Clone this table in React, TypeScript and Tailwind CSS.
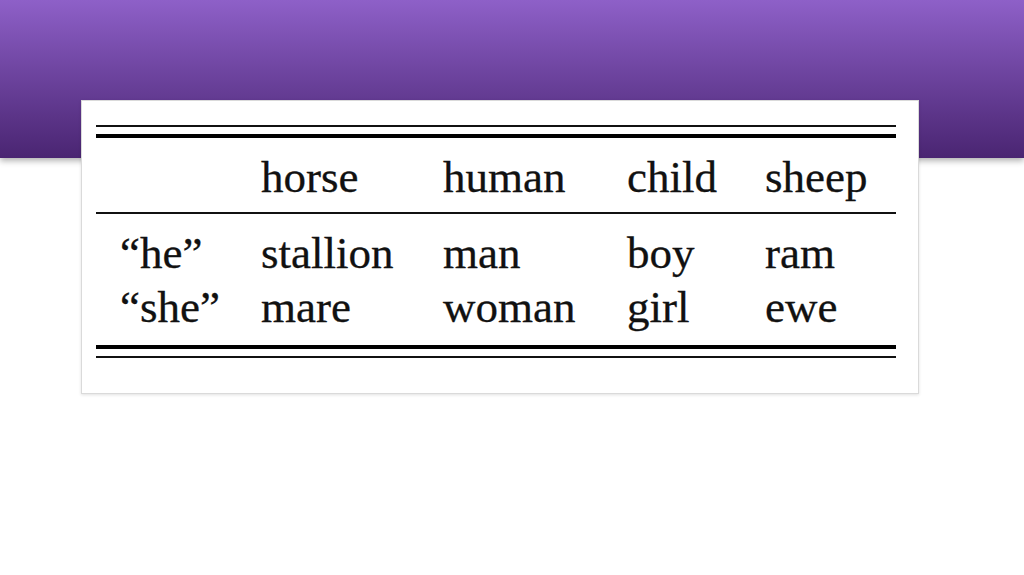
const COLS = ["horse", "human", "child", "sheep"]

const ROWS = [
  { label: "\u201che\u201d", words: ["stallion", "man", "boy", "ram"] },
  { label: "\u201cshe\u201d", words: ["mare", "woman", "girl", "ewe"] },
]

function Row({ label, words }: { label: string; words: string[] }) {
  return (
    <div className="grid grid-cols-[145px_182px_184px_138px_1fr] pl-[20px] h-[54px] leading-[54px]">
      <span className="pl-[4px]">{label}</span>
      {words.map((w) => (
        <span key={w}>{w}</span>
      ))}
    </div>
  )
}

export default function App() {
  return (
    <div className="h-[575px] w-[1024px] overflow-hidden bg-white">
      <div className="h-[158px] bg-gradient-to-b from-[#8e60c8] to-[#4a2572] shadow-[0_3px_6px_rgba(0,0,0,0.3)]" />
      <div className="relative ml-[81px] mt-[-58px] w-[838px] border border-[#dadada] bg-white pt-[24px] pr-[22px] pb-[35px] pl-[14px] shadow-[0_1px_3px_rgba(0,0,0,0.12)]">
        <div className="h-[2px] bg-[#111]" />
        <div className="mt-[7px] h-[4px] bg-black" />
        <div className="mt-[12px] text-[45px] text-[#111] font-['Liberation_Serif',serif] [-webkit-text-stroke:0.3px_#111]">
          <div className="grid grid-cols-[145px_182px_184px_138px_1fr] pl-[20px] h-[54px] leading-[54px]">
            <span />
            {COLS.map((c) => (
              <span key={c}>{c}</span>
            ))}
          </div>
        </div>
        <div className="mt-[8px] h-[2px] bg-[#111]" />
        <div className="mt-[12px] text-[45px] text-[#111] font-['Liberation_Serif',serif] [-webkit-text-stroke:0.3px_#111]">
          {ROWS.map((r) => (
            <Row key={r.label} label={r.label} words={r.words} />
          ))}
        </div>
        <div className="mt-[11px] h-[4px] bg-black" />
        <div className="mt-[7px] h-[2px] bg-[#111]" />
      </div>
    </div>
  )
}
